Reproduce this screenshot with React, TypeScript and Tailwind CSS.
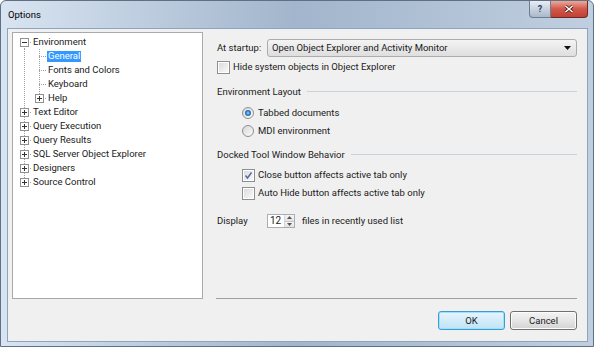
import React from 'react';

type Row = {
  label: string;
  level: 0 | 1;
  box?: 'plus' | 'minus';
  line: 'first' | 'mid' | 'last';
  selected?: boolean;
};

const rows: Row[] = [
  { label: 'Environment', level: 0, box: 'minus', line: 'first' },
  { label: 'General', level: 1, line: 'mid', selected: true },
  { label: 'Fonts and Colors', level: 1, line: 'mid' },
  { label: 'Keyboard', level: 1, line: 'mid' },
  { label: 'Help', level: 1, box: 'plus', line: 'last' },
  { label: 'Text Editor', level: 0, box: 'plus', line: 'mid' },
  { label: 'Query Execution', level: 0, box: 'plus', line: 'mid' },
  { label: 'Query Results', level: 0, box: 'plus', line: 'mid' },
  { label: 'SQL Server Object Explorer', level: 0, box: 'plus', line: 'mid' },
  { label: 'Designers', level: 0, box: 'plus', line: 'mid' },
  { label: 'Source Control', level: 0, box: 'plus', line: 'last' },
];

const dots = { stroke: '#a0a0a0', strokeDasharray: '1 1', shapeRendering: 'crispEdges' as const };

const Expander = ({ cx, kind }: { cx: number; kind: 'plus' | 'minus' }) => (
  <g shapeRendering="crispEdges">
    <rect x={cx - 4} y={3.5} width={8} height={8} fill="#fff" stroke="#919191" />
    <line x1={cx - 2} y1={7.5} x2={cx + 3} y2={7.5} stroke="#333" />
    {kind === 'plus' && <line x1={cx + 0.5} y1={5} x2={cx + 0.5} y2={10} stroke="#333" />}
  </g>
);

const TreeGutter = ({ row }: { row: Row }) => {
  if (row.level === 0) {
    const y1 = row.line === 'first' ? 7 : 0;
    const y2 = row.line === 'last' ? 7.5 : 14;
    return (
      <svg width="20" height="14" className="shrink-0">
        <line x1={11.5} y1={y1} x2={11.5} y2={y2} {...dots} />
        <line x1={11} y1={7.5} x2={19} y2={7.5} {...dots} />
        {row.box && <Expander cx={11} kind={row.box} />}
      </svg>
    );
  }
  const y2 = row.line === 'last' ? 7.5 : 14;
  return (
    <svg width="34" height="14" className="shrink-0">
      <line x1={11.5} y1={0} x2={11.5} y2={14} {...dots} />
      <line x1={26.5} y1={0} x2={26.5} y2={y2} {...dots} />
      <line x1={26} y1={7.5} x2={34} y2={7.5} {...dots} />
      {row.box && <Expander cx={26} kind={row.box} />}
    </svg>
  );
};

const CheckBox = ({ checked }: { checked?: boolean }) => (
  <div className="w-[13px] h-[13px] shrink-0 border border-[#8e8f8f] bg-white p-[1px]">
    <div className="w-full h-full bg-linear-to-br from-[#dcdcdc] to-[#f8f8f8] flex items-center justify-center">
      {checked && (
        <svg width="9" height="9" viewBox="0 0 9 9">
          <path d="M1.5 4.5 L3.5 7 L7.5 1.5" fill="none" stroke="#5468a0" strokeWidth="1.4" />
        </svg>
      )}
    </div>
  </div>
);

const Radio = ({ checked }: { checked?: boolean }) => (
  <div className="w-[12px] h-[12px] shrink-0 rounded-full border border-[#8e8f8f] bg-linear-to-br from-[#d8d8d8] to-[#fbfbfb] flex items-center justify-center">
    {checked && <div className="w-[6px] h-[6px] rounded-full bg-radial from-[#8fd6ff] via-[#2b78c6] to-[#1b4f8a]" />}
  </div>
);

const GroupHeader = ({ text }: { text: string }) => (
  <div className="flex items-center h-[14px] pl-[1px]">
    <span>{text}</span>
    <div className="flex-1 h-px bg-[#c9d1d9] ml-[6px] mb-[2px]" />
  </div>
);

export default function App() {
  return (
    <div className="w-[598px] h-[350px] bg-white font-['Roboto',sans-serif] text-[9.5px] text-[#1a1a1a] leading-none">
      <div className="w-[594px] h-[347px] flex flex-col border border-[#5f6f84] rounded-t-[6px] bg-linear-to-r from-[#d8e4f1] via-[#a2b5cc] to-[#c0cfe0]">
        {/* Title bar */}
        <div className="h-[27px] flex items-start pl-[7px] pr-[5px]">
          <span className="mt-[9px] text-[9.5px] text-black">Options</span>
          <div className="ml-auto flex">
            <div className="w-[22px] h-[17px] border border-[#6e7e91] border-t-0 rounded-bl-[4px] bg-linear-to-b from-[#e8eef5] to-[#a9b8ca] flex items-center justify-center text-[9px] font-bold text-[#2c3e5c]">
              ?
            </div>
            <div className="w-[37px] h-[17px] border border-[#6e2a22] border-t-0 border-l-0 rounded-br-[4px] bg-linear-to-b from-[#e9a99b] via-[#d0574a] to-[#c24034] flex items-center justify-center">
              <svg width="10" height="8" viewBox="0 0 10 8">
                <path d="M1.5 1 L8.5 7 M8.5 1 L1.5 7" stroke="#4a1a14" strokeWidth="3" />
                <path d="M1.5 1 L8.5 7 M8.5 1 L1.5 7" stroke="#fff" strokeWidth="1.6" />
              </svg>
            </div>
          </div>
        </div>

        {/* Client area */}
        <div className="ml-[6px] mr-[5px] h-[314px] border border-[#8ea3bd] bg-[#f0f0f0] flex flex-col pl-[4px] pt-[3px] pr-[10px]">
          <div className="flex">
            {/* Tree */}
            <div className="w-[191px] h-[267px] bg-white border border-[#a9a9a9] pt-[2px] shrink-0">
              {rows.map((r) => (
                <div key={r.label} className="flex items-center h-[14px]">
                  <TreeGutter row={r} />
                  {r.selected ? (
                    <span className="bg-[#3399ff] text-white h-[11px] px-[1px] flex items-center">{r.label}</span>
                  ) : (
                    <span className={r.level === 1 ? 'pl-[1px]' : ''}>{r.label}</span>
                  )}
                </div>
              ))}
            </div>

            {/* Settings */}
            <div className="ml-[13px] w-[361px] h-[267px] border-b border-[#a0a0a0] flex flex-col">
              <div className="mt-[7px] h-[18px] flex items-center pl-[1px]">
                <span className="w-[50px]">At startup:</span>
                <div className="flex-1 h-[18px] border border-[#acacac] rounded-[3px] bg-linear-to-b from-[#f4f4f4] to-[#dedede] flex items-center pl-[4px] pr-[5px]">
                  <span>Open Object Explorer and Activity Monitor</span>
                  <svg width="7" height="4" viewBox="0 0 7 4" className="ml-auto">
                    <path d="M0 0 H7 L3.5 4 Z" fill="#111" />
                  </svg>
                </div>
              </div>
              <div className="mt-[3px] h-[14px] flex items-center pl-[1px]">
                <CheckBox />
                <span className="ml-[3px]">Hide system objects in Object Explorer</span>
              </div>

              <div className="mt-[11px]">
                <GroupHeader text="Environment Layout" />
              </div>
              <div className="mt-[7px] h-[14px] flex items-center pl-[26px]">
                <Radio checked />
                <span className="ml-[4px]">Tabbed documents</span>
              </div>
              <div className="mt-[4px] h-[14px] flex items-center pl-[26px]">
                <Radio />
                <span className="ml-[4px]">MDI environment</span>
              </div>

              <div className="mt-[10px]">
                <GroupHeader text="Docked Tool Window Behavior" />
              </div>
              <div className="mt-[6px] h-[14px] flex items-center pl-[26px]">
                <CheckBox checked />
                <span className="ml-[3px]">Close button affects active tab only</span>
              </div>
              <div className="mt-[4px] h-[14px] flex items-center pl-[26px]">
                <CheckBox />
                <span className="ml-[3px]">Auto Hide button affects active tab only</span>
              </div>

              <div className="mt-[14px] h-[14px] flex items-center pl-[1px]">
                <span className="w-[50px]">Display</span>
                <div className="w-[28px] h-[14px] bg-white border border-[#abadb3] flex items-center">
                  <span className="pl-[2px] text-[10px]">12</span>
                  <div className="ml-auto h-full w-[10px] flex flex-col border-l border-[#d5d5d5]">
                    <div className="flex-1 flex items-center justify-center bg-linear-to-b from-[#f6f6f6] to-[#e2e2e2] border-b border-[#c8c8c8]">
                      <svg width="5" height="3" viewBox="0 0 5 3"><path d="M0 3 L2.5 0 L5 3 Z" fill="#555" /></svg>
                    </div>
                    <div className="flex-1 flex items-center justify-center bg-linear-to-b from-[#f6f6f6] to-[#e2e2e2]">
                      <svg width="5" height="3" viewBox="0 0 5 3"><path d="M0 0 L5 0 L2.5 3 Z" fill="#555" /></svg>
                    </div>
                  </div>
                </div>
                <span className="ml-[7px]">files in recently used list</span>
              </div>
            </div>
          </div>

          {/* Buttons */}
          <div className="mt-[12px] flex justify-end gap-[5px]">
            <button className="w-[67px] h-[19px] rounded-[3px] border border-[#3c9bd6] bg-linear-to-b from-[#e6f5fc] to-[#bfe3f6] shadow-[inset_0_0_0_1px_#9fe0fb] flex items-center justify-center">
              OK
            </button>
            <button className="w-[67px] h-[19px] rounded-[3px] border border-[#707070] bg-linear-to-b from-[#f3f3f3] via-[#e6e6e6] to-[#d3d3d3] shadow-[inset_0_0_0_1px_#fcfcfc] flex items-center justify-center">
              Cancel
            </button>
          </div>
        </div>
      </div>
    </div>
  );
}
